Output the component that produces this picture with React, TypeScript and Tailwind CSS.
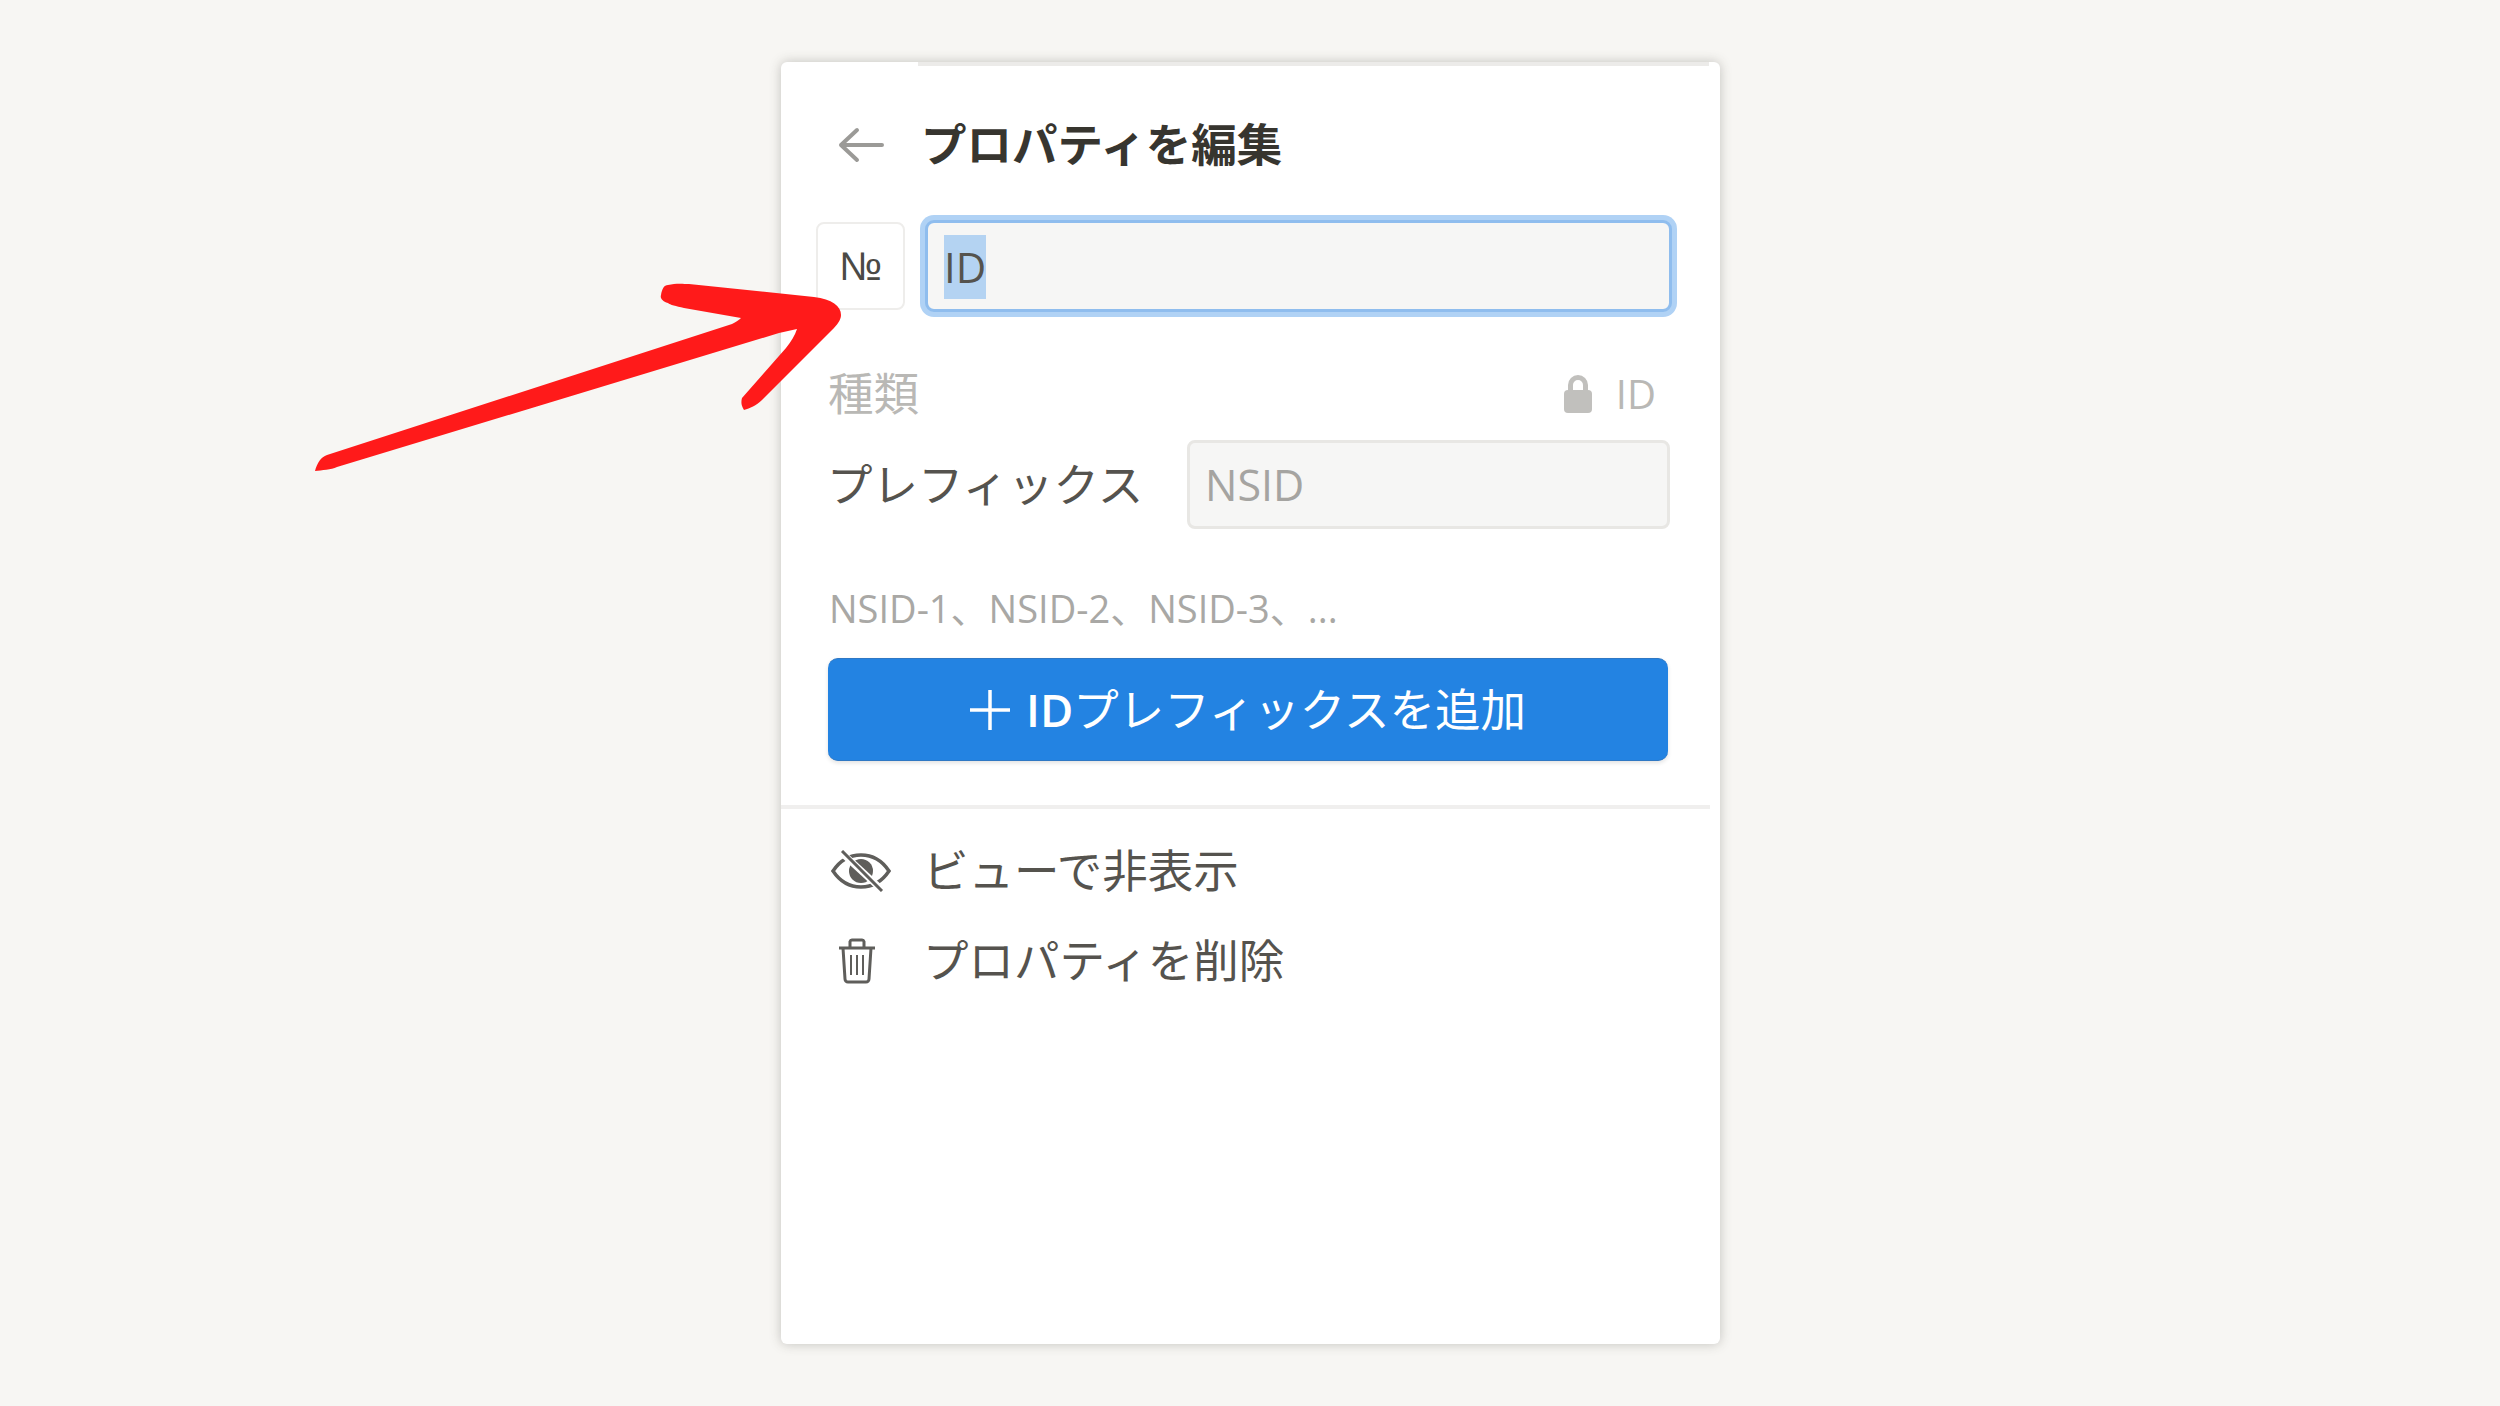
const BackArrow = () => (
  <svg width="46" height="36" viewBox="0 0 46 36" fill="none" stroke="#9b9a97" strokeWidth="4" strokeLinecap="round" strokeLinejoin="round">
    <path d="M3 18h41M19 3 3 18l16 15" />
  </svg>
)

const LockIcon = () => (
  <svg width="28" height="38" viewBox="0 0 28 38" fill="#c1c0bd">
    <path d="M4 18V10a10 10 0 0 1 20 0v8h-5V10a5 5 0 0 0-10 0v8z" />
    <rect x="0" y="15" width="28" height="23" rx="4" />
  </svg>
)

const EyeOffIcon = () => (
  <svg width="60" height="42" viewBox="0 0 60 42" fill="none" stroke="#5f5e5b">
    <path d="M2 21C10 9 19 5 30 5s20 4 28 16c-8 12-17 16-28 16S10 33 2 21Z" strokeWidth="3.500" />
    <circle cx="30" cy="21" r="12" fill="#5f5e5b" stroke="none" />
    <path d="M12 4l38 35" stroke="#ffffff" strokeWidth="7" />
    <path d="M11 1l40 40" strokeWidth="3" />
  </svg>
)

const TrashIcon = () => (
  <svg width="38" height="46" viewBox="0 0 38 46" fill="none" stroke="#5f5e5b" strokeWidth="3">
    <path d="M1 10h36M12 10V3.500A2 2 0 0 1 14 2h10a2 2 0 0 1 2 1.500V10" />
    <path d="M5 10l2 31a3 3 0 0 0 3 3h18a3 3 0 0 0 3-3l2-31" />
    <path d="M13 17v20M19 17v20M25 17v20" strokeWidth="2" />
  </svg>
)

const PlusIcon = () => (
  <svg width="40" height="40" viewBox="0 0 40 40" stroke="#ffffff" strokeWidth="3.500">
    <path d="M20 0v40M0 20h40" />
  </svg>
)

const RedArrow = () => (
  <svg className="absolute left-[300px] top-[270px]" width="560" height="210" viewBox="300 270 560 210">
    <path
      fill="#ff1a1a"
      d="M315 471C317 463 321 457 327 455L732 324C736 322 739 320 741 318L684 308C676 306 670 305 668 303C662 301 660 298 661 295C662 289 664 285 668 285C676 283 684 284 689 284L814 297C832 299 841 306 841 315C841 320 837 325 832 330L762 400C756 406 750 408 744 410C741 405 741 402 742 398L786 348C791 342 795 335 797 329L779 333L337 467C331 470 322 470 315 471Z"
    />
  </svg>
)

const App = () => {
  return (
    <div className="relative min-h-screen bg-[#f7f6f3] pl-px pt-[62px] font-['Open_Sans','Noto_Sans_CJK_JP',sans-serif] text-[#37352f]">
      <div className="mx-auto h-[1282px] w-[939px] overflow-hidden rounded-[6px] bg-white shadow-[0_0_12px_rgba(60,56,50,0.28)]">
        <div className="ml-[137px] mr-[11px] h-[4px] bg-[#ecebe9]" />

        <div className="mt-[37px] flex h-[84px] items-center pl-[57px]">
          <BackArrow />
          <h1 className="ml-[37px] text-[45.500px] font-bold leading-none">プロパティを編集</h1>
        </div>

        <div className="ml-[35px] mt-[33px] flex w-[856px] items-center">
          <div className="flex h-[88px] w-[89px] items-center justify-center rounded-[8px] border-2 border-[#eeedeb] font-['Liberation_Sans',sans-serif] text-[40px] leading-none text-[#4b4a46]">
            №
          </div>
          <div className="ml-[20px] flex h-[92px] w-[747px] items-center rounded-[9px] border-[3px] border-[#8fbdee] bg-[#f6f6f5] pl-[16px] pt-[2px] shadow-[0_0_0_5px_#b0d2f5]">
            <span className="bg-[#b4d3f2] text-[42px] leading-[64px] text-[#55534e]">ID</span>
          </div>
        </div>

        <div className="ml-[47px] mr-[64px] mt-[60px] flex h-[44px] items-center justify-between text-[#b9b8b5]">
          <span className="text-[45.500px] leading-none">種類</span>
          <span className="flex items-center gap-[24px]">
            <LockIcon />
            <span className="text-[40px] leading-none">ID</span>
          </span>
        </div>

        <div className="ml-[46px] mt-[24px] flex w-[843px] items-center justify-between">
          <span className="text-[45.500px] leading-none text-[#55534e]">プレフィックス</span>
          <div className="flex h-[89px] w-[483px] items-center rounded-[8px] border-[3px] border-[#e8e7e4] bg-[#f6f6f5] pl-[15px] text-[43px] leading-none text-[#a5a4a1]">
            NSID
          </div>
        </div>

        <p className="ml-[48px] mt-[57px] text-[38px] leading-[44px] text-[#a9a8a5]">NSID-1、NSID-2、NSID-3、...</p>

        <button className="ml-[47px] mt-[28px] flex h-[103px] w-[840px] items-center justify-center rounded-[10px] border-y border-[#2f78c4] bg-[#2383e2] text-[45.500px] leading-none text-white shadow-[0_2px_4px_rgba(15,15,15,0.12)]">
          <PlusIcon />
          <span className="ml-[16px] font-semibold">ID</span>
          <span>プレフィックスを追加</span>
        </button>

        <div className="mr-[10px] mt-[44px] h-[4px] bg-[#f0efee]" />

        <div className="mt-[17px] text-[45.500px] leading-none text-[#55534e]">
          <div className="flex h-[90px] items-center">
            <div className="ml-[50px] mr-[32px] w-[60px]">
              <EyeOffIcon />
            </div>
            <span>ビューで非表示</span>
          </div>
          <div className="flex h-[90px] items-center">
            <div className="ml-[57px] mr-[47px] w-[38px]">
              <TrashIcon />
            </div>
            <span>プロパティを削除</span>
          </div>
        </div>
      </div>
      <RedArrow />
    </div>
  )
}

export default App
